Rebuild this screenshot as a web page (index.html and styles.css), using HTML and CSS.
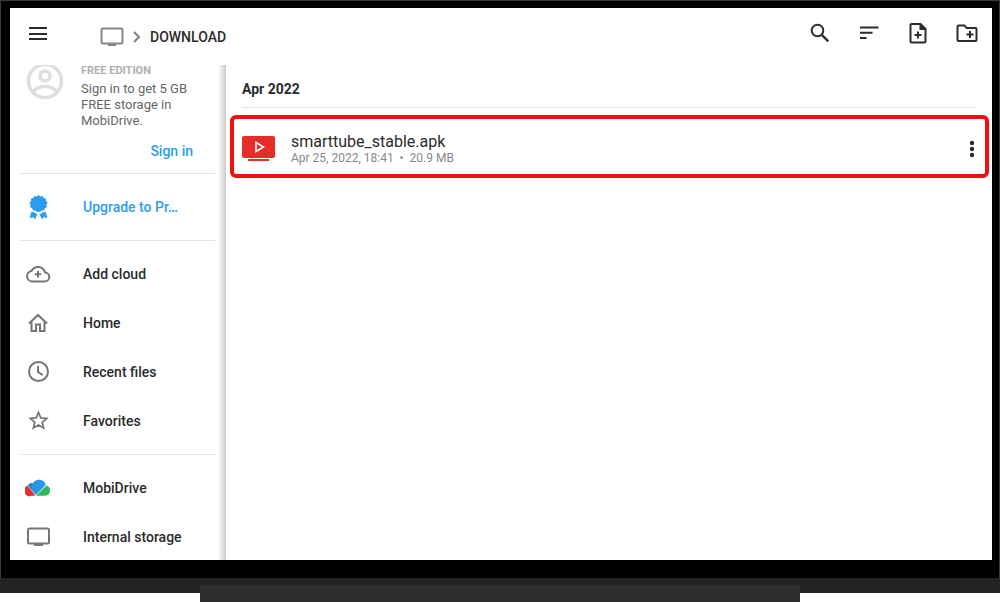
FILE: index.html
```
<!DOCTYPE html>
<html lang="en">
<head>
  <meta charset="UTF-8">
  <meta name="viewport" content="width=device-width, initial-scale=1">
  <title>Download</title>
  <link rel="stylesheet" href="styles.css">
</head>
<body>
  <div class="tv">
    <div class="screen">
      <header class="toolbar">
        <button class="icon-btn menu-btn" aria-label="Menu">
          <svg width="20" height="16" viewBox="0 0 20 16" fill="#2b2b2b"><path d="M1 2h18v2H1zM1 8h18v2H1zM1 13h18v2H1z"/></svg>
        </button>
        <nav class="breadcrumb">
          <a href="#" aria-label="Internal storage">
            <svg width="24" height="20" viewBox="0 0 24 20"><rect x="1.500" y="1.500" width="21" height="15" rx="1.500" fill="none" stroke="#858585" stroke-width="2"/><path d="M8 17h8v2H8z" fill="#858585"/></svg>
          </a>
          <svg width="8" height="14" viewBox="0 0 8 14" fill="none" stroke="#858585" stroke-width="2.200"><path d="M1 2l5 5-5 5"/></svg>
          <span>DOWNLOAD</span>
        </nav>
        <div class="actions">
          <button class="icon-btn" aria-label="Search">
            <svg width="24" height="24" viewBox="0 0 24 24" fill="none" stroke="#2b2b2b" stroke-width="2"><circle cx="9.500" cy="9.500" r="5.800"/><path d="M13.800 13.800l6.500 6.500" stroke-width="2.400"/></svg>
          </button>
          <button class="icon-btn" aria-label="Sort">
            <svg width="24" height="24" viewBox="0 0 24 24" fill="#2b2b2b"><path d="M3 5.500h18.500v2H3zM3 10.800h12.500v2H3zM3 16h6.500v2H3z"/></svg>
          </button>
          <button class="icon-btn" aria-label="New file">
            <svg width="24" height="24" viewBox="0 0 24 24"><path d="M5.500 3h9L19.500 8v12.500a1 1 0 0 1-1 1H5.500a1 1 0 0 1-1-1v-16.500a1 1 0 0 1 1-1z" fill="none" stroke="#2b2b2b" stroke-width="2"/><path d="M13.500 2.500l6.500 6.500h-6.500zM11 10.500h2v2.500h2.500v2H13v2.500h-2V15H8.500v-2H11z" fill="#2b2b2b"/></svg>
          </button>
          <button class="icon-btn" aria-label="New folder">
            <svg width="24" height="24" viewBox="0 0 24 24"><path d="M3.500 4.500h6l2 2.500h9a1 1 0 0 1 1 1v11a1 1 0 0 1-1 1h-17a1 1 0 0 1-1-1v-13.500a1 1 0 0 1 1-1z" fill="none" stroke="#2b2b2b" stroke-width="2"/><path d="M14 10h2v2.500h2.500v2H16V17h-2v-2.500h-2.500v-2H14z" fill="#2b2b2b"/></svg>
          </button>
        </div>
      </header>

      <div class="content">
        <aside class="sidebar">
          <div class="account">
            <svg width="38" height="34" viewBox="0 3 38 34" fill="none" stroke="#dedede" stroke-width="3.500"><circle cx="19" cy="19" r="16.500"/><circle cx="19" cy="14" r="5"/><path d="M7 30c3-4 7.500-5.500 12-5.500S28 26 31 30"/></svg>
            <div class="account-text">
              <div class="edition">FREE EDITION</div>
              <p>Sign in to get 5 GB FREE storage in MobiDrive.</p>
              <a class="sign-in" href="#">Sign in</a>
            </div>
          </div>

          <nav class="group">
            <a class="item upgrade" href="#">
              <svg width="26" height="26" viewBox="0 0 26 26" fill="#2b9df0"><path d="M13.500 1l1.800 1.500 2.400-.6.9 2.200 2.400.5-.1 2.500 1.700 1.700-1.200 2.100.6 2.400-2.200 1-.7 2.300-2.400-.1-1.700 1.700-1.500-.8-1.500.8-1.700-1.700-2.400.1-.7-2.300-2.200-1 .6-2.400L4.400 8.800l1.700-1.700L6 4.600l2.400-.5.900-2.200 2.400.6z"/><path d="M6.500 17.500l2 .8 1.400.2 1.600 1.500 1 .1-2.400 5.400-1.600-2.300-4 .8zM20.500 17.500l-2 .8-1.400.2-1.600 1.500-1 .1 2.400 5.400 1.600-2.300 4 .8z"/></svg>
              <span>Upgrade to Pr…</span>
            </a>
          </nav>

          <nav class="group">
            <a class="item" href="#">
              <svg width="26" height="26" viewBox="0 0 26 26" fill="none" stroke="#757575" stroke-width="2"><path d="M7 20.500h12.500a4.500 4.500 0 0 0 .5-9A7.200 7.200 0 0 0 6.500 10 5.300 5.300 0 0 0 7 20.500z"/><path d="M13 10v6.500M9.800 13.200h6.500"/></svg>
              <span>Add cloud</span>
            </a>
            <a class="item" href="#">
              <svg width="26" height="26" viewBox="0 0 26 26" fill="none" stroke="#757575" stroke-width="2"><path d="M4 13.500L13 5l9 8.500M6.500 12v9H11v-6.500h4V21h4.500v-9"/></svg>
              <span>Home</span>
            </a>
            <a class="item" href="#">
              <svg width="26" height="26" viewBox="0 0 26 26" fill="none" stroke="#757575" stroke-width="2"><circle cx="13.500" cy="12.500" r="9.500"/><path d="M13 7v6l4.800 3"/></svg>
              <span>Recent files</span>
            </a>
            <a class="item" href="#">
              <svg width="26" height="26" viewBox="0 0 26 26" fill="none" stroke="#757575" stroke-width="1.700"><path d="M13.500 4.500l2.300 5.400 5.900.5-4.500 3.900 1.400 5.700-5.100-3.100L8.400 20l1.400-5.700-4.500-3.900 5.900-.5z"/></svg>
              <span>Favorites</span>
            </a>
          </nav>

          <nav class="group">
            <a class="item" href="#">
              <svg width="26" height="26" viewBox="0 0 26 26"><path d="M2.500 10.500l8 10.300H7A5.500 5.500 0 0 1 2.500 10.500z" fill="#e53030"/><path d="M21.500 10.500a5.300 5.300 0 0 1-2 10.300H11z" fill="#2fbb57"/><path d="M3 10.500c.8-2 3-2.800 4.500-2.300l5 6-2.200 5.300z" fill="#1c87c9"/><path d="M7.500 9C8.500 6 11.500 4.800 14 4.800c3.500 0 6.200 2.200 6.700 5.200L11.300 19.800 6.500 14z" fill="#2b97e8"/></svg>
              <span>MobiDrive</span>
            </a>
            <a class="item" href="#">
              <svg width="26" height="26" viewBox="0 0 26 26"><rect x="3" y="4.500" width="21" height="15" rx="1.500" fill="none" stroke="#757575" stroke-width="2"/><path d="M9 20h9v2H9z" fill="#757575"/></svg>
              <span>Internal storage</span>
            </a>
          </nav>
        </aside>

        <main class="files">
          <h2>Apr 2022</h2>
          <div class="file">
            <svg width="34" height="26" viewBox="0 0 34 26"><rect x="0" y="0" width="33" height="22" rx="2" fill="#e62d2a"/><path d="M6 23h21v2H6z" fill="#e62d2a"/><path d="M14 6.500l7.500 4.500-7.500 4.500z" fill="none" stroke="#fff" stroke-width="1.600"/></svg>
            <div class="file-text">
              <div class="file-name">smarttube_stable.apk</div>
              <div class="file-info">Apr 25, 2022, 18:41 &nbsp;• &nbsp;20.9 MB</div>
            </div>
            <button class="icon-btn" aria-label="More options">
              <svg width="6" height="18" viewBox="0 0 6 18" fill="#2b2b2b"><circle cx="3" cy="3" r="2.200"/><circle cx="3" cy="9" r="2.200"/><circle cx="3" cy="15" r="2.200"/></svg>
            </button>
          </div>
        </main>
      </div>
    </div>
  </div>
  <div class="base"></div>
  <div class="stand"></div>
</body>
</html>
```
FILE: styles.css
```
* {
  box-sizing: border-box;
}
body {
  margin: 0;
  height: 100vh;
  display: flex;
  flex-direction: column;
  background: #fff;
  color: #2b2b2b;
  font-family: Roboto, sans-serif;
  font-size: 14px;
}
a {
  color: inherit;
  text-decoration: none;
}
svg {
  display: block;
  flex: none;
}

/* tv frame */
.tv {
  flex: 1;
  min-height: 0;
  display: flex;
  padding: 7px 7px 18px 9px;
  background: #000;
  border: 1px solid #3a3a3a;
  border-bottom: 0;
}
.base {
  height: 15px;
  background: #242424;
}
.stand {
  width: 60%;
  height: 17px;
  margin: -8px auto 0;
  background: #2d2d2d;
}
.screen {
  flex: 1;
  min-width: 0;
  display: flex;
  flex-direction: column;
  background: #fff;
}

/* toolbar */
.toolbar {
  display: flex;
  align-items: center;
  height: 57px;
  padding: 0 13px 8px 18px;
}
.icon-btn {
  padding: 0;
  border: none;
  background: none;
  cursor: pointer;
}
.breadcrumb {
  display: flex;
  align-items: center;
  gap: 9px;
  margin-left: 52px;
  padding-top: 8px;
  font-weight: 500;
}
.actions {
  display: flex;
  gap: 25px;
  margin-left: auto;
}

/* sidebar */
.content {
  flex: 1;
  min-height: 0;
  display: flex;
}
.sidebar {
  width: 216px;
  flex: none;
  overflow: hidden;
  padding: 0 11px 0 10px;
  background: linear-gradient(to right, #f4f4f4, #cccccc) right / 7px 100% no-repeat;
}
.account {
  display: flex;
  gap: 17px;
  height: 108px;
  padding: 0 22px 0 6px;
}
.account-text {
  flex: 1;
  color: #666;
  font-size: 13px;
  line-height: 16px;
}
.edition {
  padding-top: 1px;
  line-height: 10px;
  font-size: 11px;
  font-weight: 700;
  color: #b0b0b0;
}
.account p {
  margin: 5px -6px 14px 0;
}
.sign-in {
  display: block;
  text-align: right;
  font-size: 14px;
  font-weight: 500;
  color: #2b9df0;
}
.group {
  padding: 8px 0 9px;
  border-top: 1px solid #e2e2e2;
}
.item {
  display: flex;
  align-items: center;
  gap: 32px;
  height: 49px;
  padding: 0 5px;
  font-weight: 500;
}
.upgrade {
  color: #2b9df0;
}

/* file list */
.files {
  flex: 1;
  min-width: 0;
  padding: 0 3px 0 4px;
}
.files h2 {
  margin: 0 13px 7px 12px;
  padding: 16px 0 10px;
  border-bottom: 1px solid #e0e0e0;
  font-size: 14px;
  line-height: 16px;
  font-weight: 700;
}
.file {
  display: flex;
  align-items: center;
  gap: 15px;
  height: 63px;
  padding: 4px 10px 0 8px;
  border: 4px solid #f01010;
  border-radius: 6px;
}
.file-text {
  flex: 1;
  padding-top: 2px;
}
.file-name {
  font-size: 16px;
  line-height: 18px;
}
.file-info {
  font-size: 12px;
  line-height: 15px;
  color: #888;
}
```
